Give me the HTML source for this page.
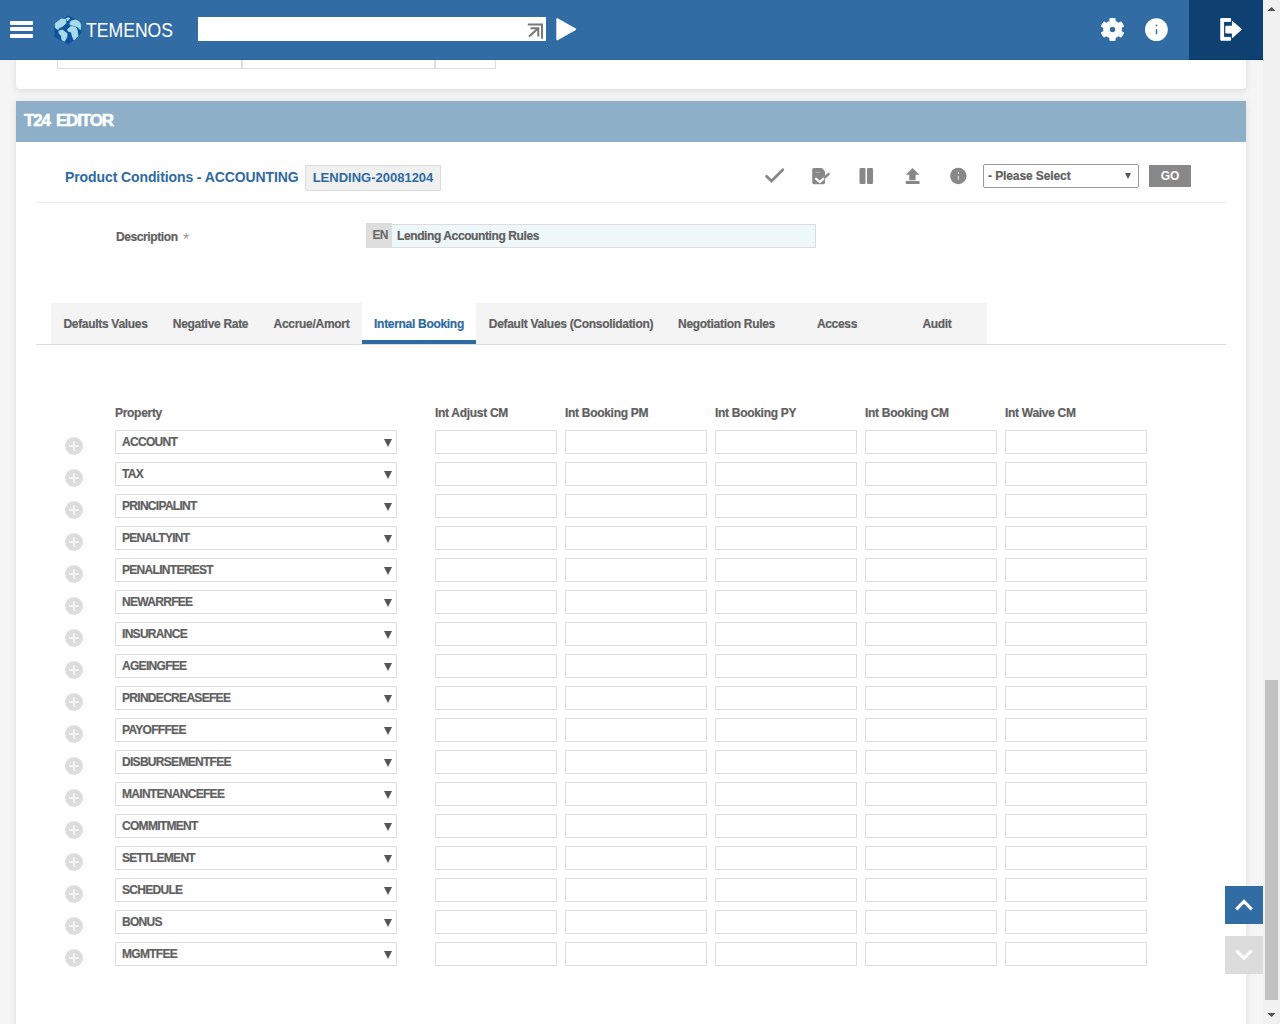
<!DOCTYPE html>
<html><head><meta charset="utf-8">
<style>
html,body{margin:0;padding:0;width:1280px;height:1024px;overflow:hidden;background:#f5f5f5;font-family:"Liberation Sans",sans-serif;}
.a{position:absolute;}
.t{white-space:nowrap;font-weight:bold;}
#hdr{left:0;top:0;width:1263px;height:60px;background:#316ca4;}
#hdrline{left:0;top:59px;width:1189px;height:1px;background:#2a659f;}
#lohline{left:1189px;top:59px;width:74px;height:1px;background:#06376c;}
#logout{left:1189px;top:0;width:74px;height:60px;background:#0e4072;}
.ham{left:10px;width:23px;height:4px;background:#fff;border-radius:1px;}
#search{left:198px;top:17px;width:348px;height:24px;background:#fff;}
#logo{left:86px;top:19px;font-size:20px;color:#fff;white-space:nowrap;transform:scaleX(0.88);transform-origin:0 0;}
#card0{left:16px;top:30px;width:1230px;height:59px;background:#fff;border-radius:0 0 4px 4px;box-shadow:0 2px 6px rgba(0,0,0,.11);}
.tl{border:1px solid #ddd;border-top:0;box-sizing:border-box;}
#card{left:16px;top:101px;width:1230px;height:960px;background:#fff;box-shadow:0 1px 8px rgba(0,0,0,.10);}
#bar{left:16px;top:101px;width:1230px;height:41px;background:#8db0c8;}
#bartxt{left:24px;top:111px;font-size:17px;color:#fff;letter-spacing:-1.15px;word-spacing:2.5px;-webkit-text-stroke:0.5px #fff;}
#title{left:65px;top:169px;font-size:14px;color:#2e6aa1;letter-spacing:-0.1px;}
#badge{left:305px;top:165px;width:136px;height:26px;box-sizing:border-box;border:1px solid #ddd;background:#f0f0f0;color:#2e6aa1;font-weight:bold;font-size:13px;line-height:24px;text-align:center;white-space:nowrap;}
#sep1{left:36px;top:202px;width:1190px;height:1px;background:#eee;}
#psel{left:983px;top:164px;width:156px;height:24px;box-sizing:border-box;border:1px solid #999;border-radius:2px;background:#fff;color:#606060;font-size:12px;font-weight:bold;line-height:22px;white-space:nowrap;}
#psel span{position:absolute;left:4px;top:0;letter-spacing:-0.1px;}
#psel i{position:absolute;left:141px;top:8px;width:0;height:0;border-left:3.8px solid transparent;border-right:3.8px solid transparent;border-top:6.5px solid #555;}
#go{left:1149px;top:165px;width:42px;height:22px;background:#888;color:#fff;font-size:12px;font-weight:bold;line-height:22px;text-align:center;}
.lbl{color:#606060;font-size:12px;}
#desc{left:116px;top:230px;letter-spacing:-0.4px;}
#desc b{color:#999;font-weight:normal;margin-left:4px;}
#en{left:366px;top:223px;width:26px;padding-left:2px;box-sizing:border-box;letter-spacing:-0.8px;height:25px;background:#ddd;color:#666;font-size:12px;font-weight:bold;line-height:25px;text-align:center;}
#descin{left:392px;top:224px;width:424px;height:24px;box-sizing:border-box;border:1px solid #ddd;border-left:0;background:#eef7fa;color:#606060;font-size:12px;font-weight:bold;line-height:22px;white-space:nowrap;}
#descin span{position:absolute;left:5px;letter-spacing:-0.4px;}
#tabbg{left:51px;top:303px;width:936px;height:41px;background:#f4f4f4;}
#tabline{left:36px;top:344px;width:1190px;height:1px;background:#ddd;}
.tab{top:303px;height:41px;color:#606060;font-size:12px;font-weight:bold;text-align:center;line-height:42px;white-space:nowrap;letter-spacing:-0.3px;}
.tab.act{background:#fff;color:#2e6aa1;border-bottom:4px solid #2f6aa3;height:37px;}
.hd{top:406px;letter-spacing:-0.3px;}
.box{border:1px solid #ddd;box-sizing:border-box;height:24px;background:#fff;}
.sel{left:115px;width:282px;color:#606060;font-size:12px;font-weight:bold;line-height:22px;white-space:nowrap;}
.sel span{position:absolute;left:6px;letter-spacing:-0.7px;}
.sel i{position:absolute;left:267.5px;top:8px;width:0;height:0;border-left:4.8px solid transparent;border-right:4.8px solid transparent;border-top:8.6px solid #555;}
.circ{left:65px;width:18px;height:18px;border-radius:50%;background:#ddd;}
.circ:before{content:"";position:absolute;left:4.3px;top:8.1px;width:9.4px;height:1.6px;background:#f4f4f4;}
.circ:after{content:"";position:absolute;left:8.2px;top:4.3px;width:1.6px;height:9.4px;background:#f4f4f4;}
.ico{fill:#888;}
#sup{left:1225px;top:886px;width:38px;height:38px;background:#316ca4;}
#sdn{left:1225px;top:936px;width:38px;height:38px;background:#dcdcdc;}
#sb{left:1263px;top:0;width:17px;height:1024px;background:#f1f1f1;}
#thumb{left:1265px;top:680px;width:13px;height:320px;background:#c1c1c1;}
#star{left:183px;top:232px;font-size:16px;color:#999;line-height:16px;}
.sel span,.hd,.tab span,#desc,#descin span,#psel span{-webkit-text-stroke:0.2px currentColor;}

</style></head><body>
<div class="a" id="card0"></div>
<div class="a tl" style="left:57px;top:40px;width:185px;height:29px"></div>
<div class="a tl" style="left:242px;top:40px;width:193px;height:29px"></div>
<div class="a tl" style="left:435px;top:40px;width:61px;height:29px"></div>
<div class="a" id="card"></div>
<div class="a" id="bar"></div>
<div class="a t" id="bartxt">T24 EDITOR</div>
<div class="a t" id="title">Product Conditions - ACCOUNTING</div>
<div class="a" id="badge"><span>LENDING-20081204</span></div>
<div class="a" id="sep1"></div>
<svg class="a" style="left:760px;top:161px" width="30" height="28" viewBox="0 0 30 28"><path d="M6.5 15.2 L11.5 20 L22.8 8.8" stroke="#888" stroke-width="2.8" fill="none" stroke-linecap="round"/></svg>
<svg class="a" style="left:808px;top:162px" width="26" height="28" viewBox="0 0 26 28"><path d="M4.2 7.5 Q4.2 6 5.7 6 L14 6 L17 9.2 L17 20.5 Q17 22.2 15.3 22.2 L5.7 22.2 Q4.2 22.2 4.2 20.5 Z" fill="#888"/><path d="M7.5 10.3 L12 10.3" stroke="#b4b4b4" stroke-width="0.9"/><path d="M7.3 16.2 L11.8 20 L20.6 12" stroke="#fff" stroke-width="2.2" fill="none"/><path d="M16.6 15.6 L20.6 12" stroke="#888" stroke-width="2.4" fill="none" stroke-linecap="round"/></svg>
<svg class="a" style="left:854px;top:162px" width="26" height="28" viewBox="0 0 26 28"><rect x="5.5" y="6" width="6" height="16" rx="1" fill="#888"/><rect x="13" y="6" width="6" height="16" rx="1" fill="#888"/></svg>
<svg class="a" style="left:900px;top:162px" width="26" height="28" viewBox="0 0 26 28"><path d="M12.5 6 L19.5 12.7 L15.6 12.7 L15.6 18.3 L9.2 18.3 L9.2 12.7 L5.8 12.7 Z" fill="#888"/><rect x="5.8" y="19" width="13.7" height="3" fill="#888"/></svg>
<svg class="a" style="left:946px;top:162px" width="26" height="28" viewBox="0 0 26 28"><circle cx="12.3" cy="14" r="8.2" fill="#888"/><rect x="11.8" y="14" width="1.1" height="3.8" fill="#d8e8e0"/><rect x="11.8" y="10.1" width="1.1" height="1.7" fill="#d8e8e0"/></svg>

<div class="a" id="psel"><span>- Please Select</span><i></i></div>
<div class="a" id="go">GO</div>
<div class="a t lbl" id="desc">Description</div><div class="a" id="star">*</div>
<div class="a" id="en">EN</div>
<div class="a" id="descin"><span>Lending Accounting Rules</span></div>
<div class="a" id="tabbg"></div>
<div class="a" id="tabline"></div>
<div class="a tab" style="left:51px;width:109px"><span>Defaults Values</span></div>
<div class="a tab" style="left:160px;width:101px"><span>Negative Rate</span></div>
<div class="a tab" style="left:261px;width:101px"><span>Accrue/Amort</span></div>
<div class="a tab act" style="left:362px;width:114px"><span>Internal Booking</span></div>
<div class="a tab" style="left:476px;width:190px"><span>Default Values (Consolidation)</span></div>
<div class="a tab" style="left:666px;width:121px"><span>Negotiation Rules</span></div>
<div class="a tab" style="left:787px;width:100px"><span>Access</span></div>
<div class="a tab" style="left:887px;width:100px"><span>Audit</span></div>
<div class="a t lbl hd" style="left:115px">Property</div>
<div class="a t lbl hd" style="left:435px">Int Adjust CM</div>
<div class="a t lbl hd" style="left:565px">Int Booking PM</div>
<div class="a t lbl hd" style="left:715px">Int Booking PY</div>
<div class="a t lbl hd" style="left:865px">Int Booking CM</div>
<div class="a t lbl hd" style="left:1005px">Int Waive CM</div>
<div class="a circ" style="top:437px"></div>
<div class="a box sel" style="top:430px"><span>ACCOUNT</span><i></i></div>
<div class="a box" style="left:435px;top:430px;width:122px"></div>
<div class="a box" style="left:565px;top:430px;width:142px"></div>
<div class="a box" style="left:715px;top:430px;width:142px"></div>
<div class="a box" style="left:865px;top:430px;width:132px"></div>
<div class="a box" style="left:1005px;top:430px;width:142px"></div>
<div class="a circ" style="top:469px"></div>
<div class="a box sel" style="top:462px"><span>TAX</span><i></i></div>
<div class="a box" style="left:435px;top:462px;width:122px"></div>
<div class="a box" style="left:565px;top:462px;width:142px"></div>
<div class="a box" style="left:715px;top:462px;width:142px"></div>
<div class="a box" style="left:865px;top:462px;width:132px"></div>
<div class="a box" style="left:1005px;top:462px;width:142px"></div>
<div class="a circ" style="top:501px"></div>
<div class="a box sel" style="top:494px"><span>PRINCIPALINT</span><i></i></div>
<div class="a box" style="left:435px;top:494px;width:122px"></div>
<div class="a box" style="left:565px;top:494px;width:142px"></div>
<div class="a box" style="left:715px;top:494px;width:142px"></div>
<div class="a box" style="left:865px;top:494px;width:132px"></div>
<div class="a box" style="left:1005px;top:494px;width:142px"></div>
<div class="a circ" style="top:533px"></div>
<div class="a box sel" style="top:526px"><span>PENALTYINT</span><i></i></div>
<div class="a box" style="left:435px;top:526px;width:122px"></div>
<div class="a box" style="left:565px;top:526px;width:142px"></div>
<div class="a box" style="left:715px;top:526px;width:142px"></div>
<div class="a box" style="left:865px;top:526px;width:132px"></div>
<div class="a box" style="left:1005px;top:526px;width:142px"></div>
<div class="a circ" style="top:565px"></div>
<div class="a box sel" style="top:558px"><span>PENALINTEREST</span><i></i></div>
<div class="a box" style="left:435px;top:558px;width:122px"></div>
<div class="a box" style="left:565px;top:558px;width:142px"></div>
<div class="a box" style="left:715px;top:558px;width:142px"></div>
<div class="a box" style="left:865px;top:558px;width:132px"></div>
<div class="a box" style="left:1005px;top:558px;width:142px"></div>
<div class="a circ" style="top:597px"></div>
<div class="a box sel" style="top:590px"><span>NEWARRFEE</span><i></i></div>
<div class="a box" style="left:435px;top:590px;width:122px"></div>
<div class="a box" style="left:565px;top:590px;width:142px"></div>
<div class="a box" style="left:715px;top:590px;width:142px"></div>
<div class="a box" style="left:865px;top:590px;width:132px"></div>
<div class="a box" style="left:1005px;top:590px;width:142px"></div>
<div class="a circ" style="top:629px"></div>
<div class="a box sel" style="top:622px"><span>INSURANCE</span><i></i></div>
<div class="a box" style="left:435px;top:622px;width:122px"></div>
<div class="a box" style="left:565px;top:622px;width:142px"></div>
<div class="a box" style="left:715px;top:622px;width:142px"></div>
<div class="a box" style="left:865px;top:622px;width:132px"></div>
<div class="a box" style="left:1005px;top:622px;width:142px"></div>
<div class="a circ" style="top:661px"></div>
<div class="a box sel" style="top:654px"><span>AGEINGFEE</span><i></i></div>
<div class="a box" style="left:435px;top:654px;width:122px"></div>
<div class="a box" style="left:565px;top:654px;width:142px"></div>
<div class="a box" style="left:715px;top:654px;width:142px"></div>
<div class="a box" style="left:865px;top:654px;width:132px"></div>
<div class="a box" style="left:1005px;top:654px;width:142px"></div>
<div class="a circ" style="top:693px"></div>
<div class="a box sel" style="top:686px"><span>PRINDECREASEFEE</span><i></i></div>
<div class="a box" style="left:435px;top:686px;width:122px"></div>
<div class="a box" style="left:565px;top:686px;width:142px"></div>
<div class="a box" style="left:715px;top:686px;width:142px"></div>
<div class="a box" style="left:865px;top:686px;width:132px"></div>
<div class="a box" style="left:1005px;top:686px;width:142px"></div>
<div class="a circ" style="top:725px"></div>
<div class="a box sel" style="top:718px"><span>PAYOFFFEE</span><i></i></div>
<div class="a box" style="left:435px;top:718px;width:122px"></div>
<div class="a box" style="left:565px;top:718px;width:142px"></div>
<div class="a box" style="left:715px;top:718px;width:142px"></div>
<div class="a box" style="left:865px;top:718px;width:132px"></div>
<div class="a box" style="left:1005px;top:718px;width:142px"></div>
<div class="a circ" style="top:757px"></div>
<div class="a box sel" style="top:750px"><span>DISBURSEMENTFEE</span><i></i></div>
<div class="a box" style="left:435px;top:750px;width:122px"></div>
<div class="a box" style="left:565px;top:750px;width:142px"></div>
<div class="a box" style="left:715px;top:750px;width:142px"></div>
<div class="a box" style="left:865px;top:750px;width:132px"></div>
<div class="a box" style="left:1005px;top:750px;width:142px"></div>
<div class="a circ" style="top:789px"></div>
<div class="a box sel" style="top:782px"><span>MAINTENANCEFEE</span><i></i></div>
<div class="a box" style="left:435px;top:782px;width:122px"></div>
<div class="a box" style="left:565px;top:782px;width:142px"></div>
<div class="a box" style="left:715px;top:782px;width:142px"></div>
<div class="a box" style="left:865px;top:782px;width:132px"></div>
<div class="a box" style="left:1005px;top:782px;width:142px"></div>
<div class="a circ" style="top:821px"></div>
<div class="a box sel" style="top:814px"><span>COMMITMENT</span><i></i></div>
<div class="a box" style="left:435px;top:814px;width:122px"></div>
<div class="a box" style="left:565px;top:814px;width:142px"></div>
<div class="a box" style="left:715px;top:814px;width:142px"></div>
<div class="a box" style="left:865px;top:814px;width:132px"></div>
<div class="a box" style="left:1005px;top:814px;width:142px"></div>
<div class="a circ" style="top:853px"></div>
<div class="a box sel" style="top:846px"><span>SETTLEMENT</span><i></i></div>
<div class="a box" style="left:435px;top:846px;width:122px"></div>
<div class="a box" style="left:565px;top:846px;width:142px"></div>
<div class="a box" style="left:715px;top:846px;width:142px"></div>
<div class="a box" style="left:865px;top:846px;width:132px"></div>
<div class="a box" style="left:1005px;top:846px;width:142px"></div>
<div class="a circ" style="top:885px"></div>
<div class="a box sel" style="top:878px"><span>SCHEDULE</span><i></i></div>
<div class="a box" style="left:435px;top:878px;width:122px"></div>
<div class="a box" style="left:565px;top:878px;width:142px"></div>
<div class="a box" style="left:715px;top:878px;width:142px"></div>
<div class="a box" style="left:865px;top:878px;width:132px"></div>
<div class="a box" style="left:1005px;top:878px;width:142px"></div>
<div class="a circ" style="top:917px"></div>
<div class="a box sel" style="top:910px"><span>BONUS</span><i></i></div>
<div class="a box" style="left:435px;top:910px;width:122px"></div>
<div class="a box" style="left:565px;top:910px;width:142px"></div>
<div class="a box" style="left:715px;top:910px;width:142px"></div>
<div class="a box" style="left:865px;top:910px;width:132px"></div>
<div class="a box" style="left:1005px;top:910px;width:142px"></div>
<div class="a circ" style="top:949px"></div>
<div class="a box sel" style="top:942px"><span>MGMTFEE</span><i></i></div>
<div class="a box" style="left:435px;top:942px;width:122px"></div>
<div class="a box" style="left:565px;top:942px;width:142px"></div>
<div class="a box" style="left:715px;top:942px;width:142px"></div>
<div class="a box" style="left:865px;top:942px;width:132px"></div>
<div class="a box" style="left:1005px;top:942px;width:142px"></div>
<div class="a" id="sup"><svg width="38" height="38" viewBox="0 0 38 38"><path d="M11.3 23.3 L19 15.5 L26.7 23.3" stroke="#fff" stroke-width="3.2" fill="none"/></svg></div>
<div class="a" id="sdn"><svg width="38" height="38" viewBox="0 0 38 38"><path d="M11.3 14.5 L19 22.3 L26.7 14.5" stroke="#fff" stroke-width="3.2" fill="none"/></svg></div>
<div class="a" id="hdr"></div>
<div class="a" id="hdrline"></div>
<div class="a" id="logout"></div>
<div class="a" id="lohline"></div>
<div class="a ham" style="top:21px"></div>
<div class="a ham" style="top:27px"></div>
<div class="a ham" style="top:34px"></div>
<svg class="a" style="left:52px;top:14px" width="32" height="32" viewBox="0 0 32 32"><path d="M16.6 2.2 L28.6 8.2 L29.2 18.8 L16.3 29.8 L3.1 22.8 L2.9 9.4 Z" fill="#0c539b" stroke="#0c539b" stroke-width="1.2" stroke-linejoin="round"/><path fill="#a8dbe9" stroke="#a8dbe9" stroke-width="0.9" stroke-linejoin="round" d="M3.1 9.4 L9.4 5 L14 5.3 L13.75 9.4 L10.3 12.5 L7.5 13.4 L6.25 15.6 L3.4 13.75 Z M14.4 4.4 L16.5 3.75 L17.8 4.4 L15.6 6.9 Z M17.8 10.3 L18.75 7.2 L23.4 5.9 L27.5 7.8 L28.75 10.9 L28.4 15.6 L25 12.5 L21.9 11.6 L18.75 10.9 Z M15.6 15.6 L18.75 12.5 L23.4 13.1 L25 15.6 L25.6 18.75 L25.9 21.9 L21.9 25.9 L20.3 21.9 L19.4 18.1 L16.25 17.2 Z M6.9 17.2 L10.3 15.9 L15 19.4 L14.7 23.4 L12.5 27.2 L10 25.9 L9.4 21.9 L7.2 19.4 Z"/></svg>
<div class="a" id="search"></div>
<svg class="a" style="left:524px;top:20px" width="22" height="22" viewBox="0 0 22 22"><path d="M3.8 4.5 L18 4.5 L18 18.7" stroke="#777" stroke-width="2" fill="none"/><path d="M6.5 8.2 L14.3 8.2 L14.3 16.5 M14.3 8.2 L5 16.5" stroke="#777" stroke-width="2" fill="none"/></svg>
<svg class="a" style="left:552px;top:14px" width="30" height="30" viewBox="0 0 30 30"><path d="M4.3 5.6 Q4.3 3.6 6.1 4.6 L23.3 14.3 Q25 15.3 23.3 16.3 L6.1 26 Q4.3 27 4.3 25 Z" fill="#fff"/></svg>
<div class="a" id="logo">TEMENOS</div>
<svg class="a" style="left:1101px;top:18px" width="23" height="23" viewBox="19 8 474 496" preserveAspectRatio="none"><path fill="#fff" d="M487.4 315.7l-42.6-24.6c4.3-23.2 4.3-47 0-70.2l42.6-24.6c4.9-2.8 7.1-8.6 5.5-14-11.1-35.6-30-67.8-54.7-94.6-3.8-4.1-10-5.1-14.8-2.3L380.8 110c-17.9-15.4-38.5-27.3-60.8-35.1V25.8c0-5.6-3.9-10.5-9.4-11.7-36.7-8.2-74.3-7.8-109.2 0-5.5 1.2-9.4 6.1-9.4 11.7V75c-22.2 7.9-42.8 19.8-60.8 35.1L88.7 85.5c-4.9-2.8-11-1.9-14.8 2.3-24.7 26.7-43.6 58.9-54.7 94.6-1.7 5.4.6 11.200 5.500 14L67.3 221c-4.3 23.2-4.3 47 0 70.2l-42.6 24.6c-4.9 2.8-7.1 8.6-5.5 14 11.1 35.6 30 67.8 54.7 94.6 3.8 4.1 10 5.1 14.8 2.3l42.6-24.6c17.9 15.4 38.5 27.3 60.8 35.1v49.2c0 5.6 3.9 10.5 9.4 11.7 36.7 8.2 74.3 7.8 109.2 0 5.5-1.2 9.4-6.1 9.4-11.7v-49.2c22.2-7.9 42.8-19.8 60.8-35.1l42.6 24.6c4.9 2.8 11 1.9 14.8-2.3 24.7-26.7 43.6-58.9 54.7-94.6 1.5-5.5-.7-11.3-5.600-14.1zM256 314c-32 0-58-26-58-58s26-58 58-58 58 26 58 58-26 58-58 58z"/></svg>
<svg class="a" style="left:1144px;top:17px" width="25" height="25" viewBox="0 0 25 25"><circle cx="12.4" cy="12.6" r="11.4" fill="#fff"/><rect x="11.8" y="12.1" width="1.4" height="5.1" fill="#316ca4"/><circle cx="12.5" cy="8.4" r="0.85" fill="#316ca4"/></svg>
<svg class="a" style="left:1215px;top:15px" width="32" height="30" viewBox="0 0 32 30"><path d="M5.8 3.6 H15.6 V6.4 H8.6 V22.4 H15.6 V25.2 H5.8 Z" fill="#fff" stroke="#fff" stroke-width="1" stroke-linejoin="round"/><path d="M10.3 11.8 Q10.3 10.8 11.3 10.8 H16.9 V6.9 Q16.9 5.4 18.1 6.4 L26.4 13.8 Q27 14.45 26.4 15.1 L18.1 22.5 Q16.9 23.5 16.9 22 V18.6 H11.3 Q10.3 18.6 10.3 17.6 Z" fill="#fff"/></svg>

<div class="a" id="sb"></div><div class="a" id="thumb"></div>
<svg class="a" style="left:1263px;top:0" width="17" height="17"><path d="M4.5 11 L8.5 7 L12.5 11 Z" fill="#505050"/></svg>
<svg class="a" style="left:1263px;top:1007px" width="17" height="17"><path d="M4.5 6 L8.5 10 L12.5 6 Z" fill="#505050"/></svg>
</body></html>
